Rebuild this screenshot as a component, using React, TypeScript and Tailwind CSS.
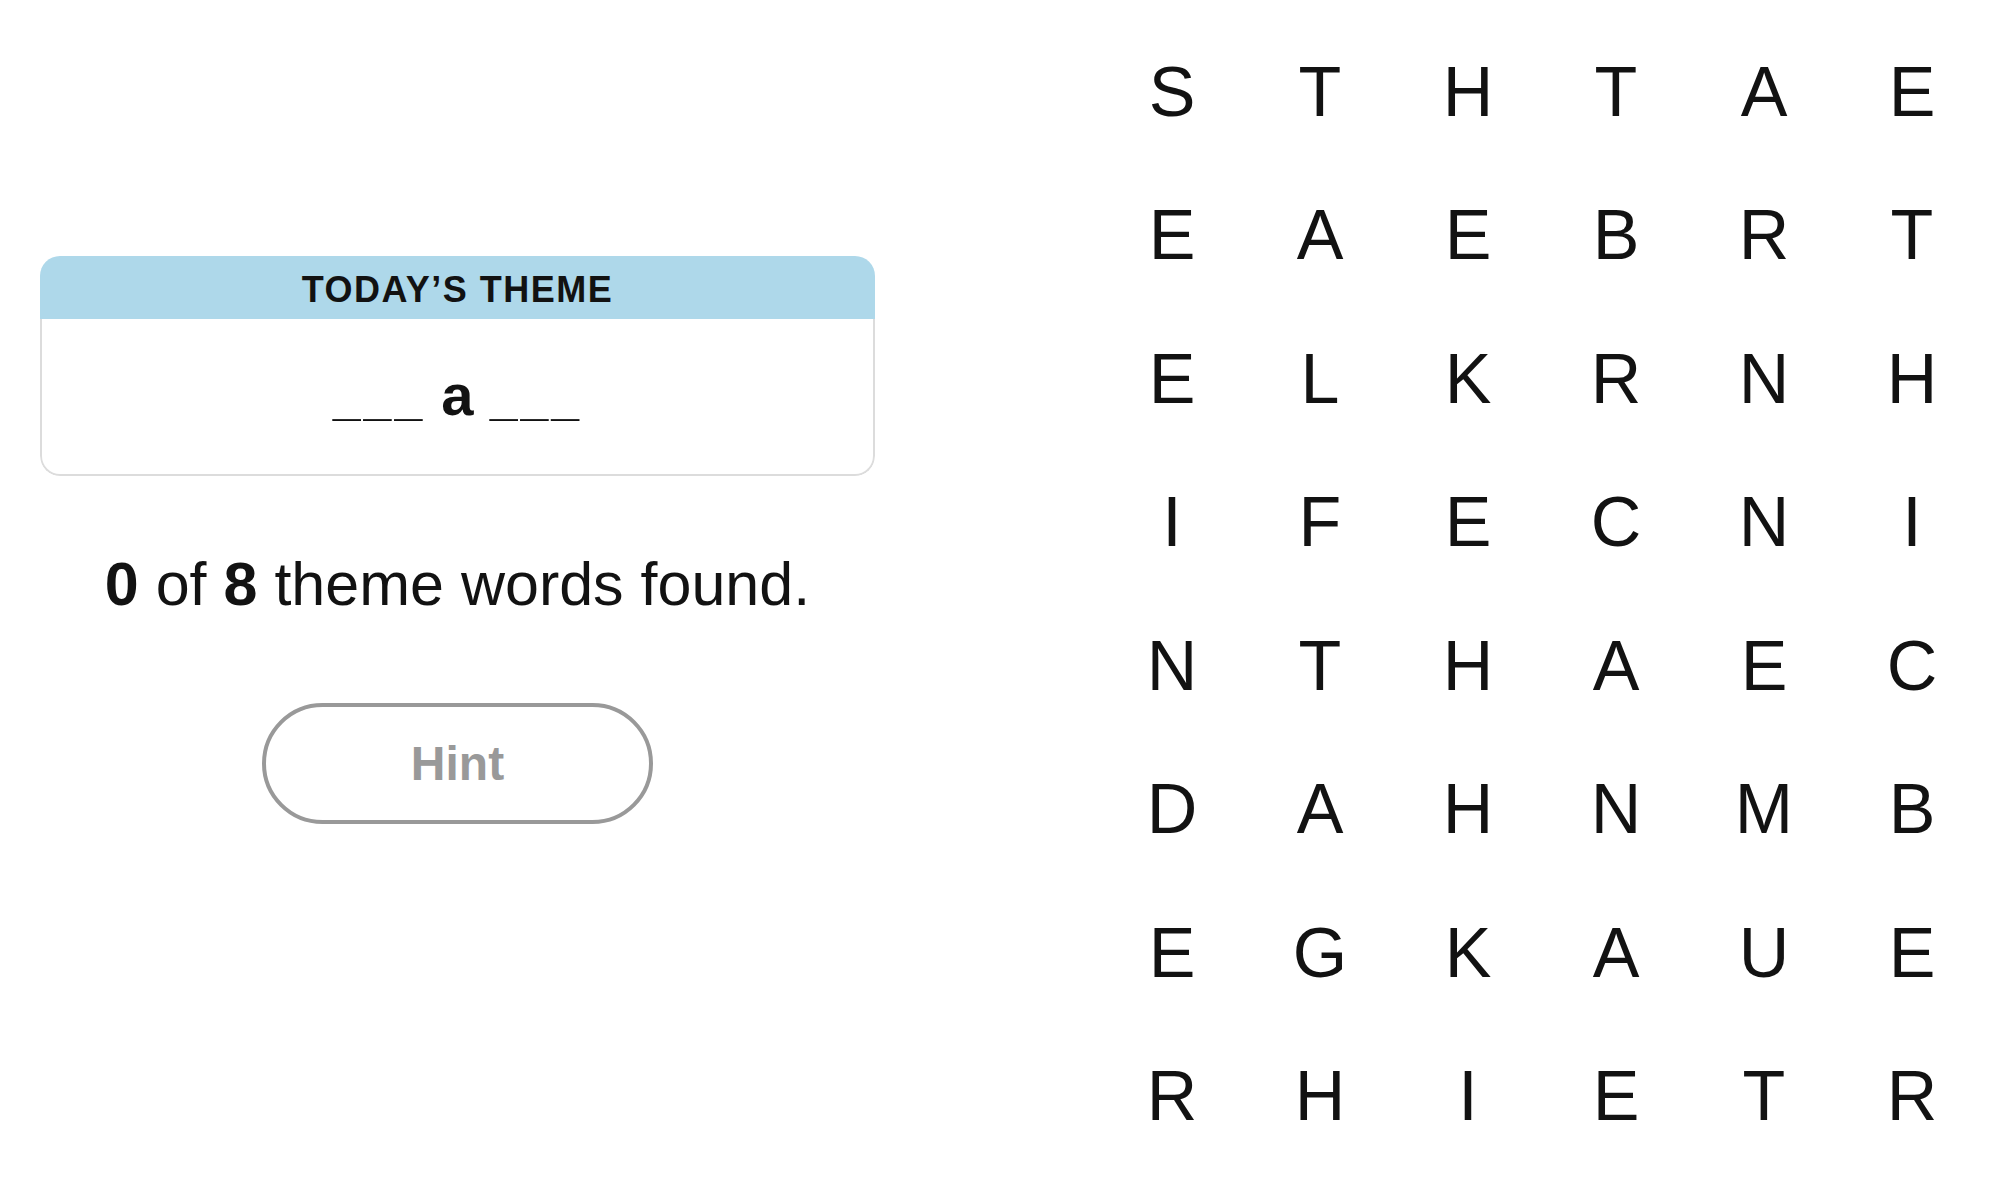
import React from "react";

const LETTERS = [
  "STHTAE",
  "EAEBRT",
  "ELKRNH",
  "IFECNI",
  "NTHAEC",
  "DAHNMB",
  "EGKAUE",
  "RHIETR",
];

function ThemeCard() {
  return (
    <div className="w-[835px] rounded-[20px] overflow-hidden">
      <div className="h-[63px] bg-[#aed8ea] flex items-center justify-center pt-[4px]">
        <span className="font-bold text-[36px] leading-none tracking-[1.5px] text-[#121212]">
          TODAY’S THEME
        </span>
      </div>
      <div className="h-[157px] border-2 border-t-0 border-[#dcdcdc] rounded-b-[20px] flex items-center justify-center pb-[4px]">
        <span className="font-bold text-[58px] leading-none text-[#121212]">
          <span className="text-[50px] tracking-[3px]">___</span> a{" "}
          <span className="text-[50px] tracking-[3px]">___</span>
        </span>
      </div>
    </div>
  );
}

export default function App() {
  return (
    <div className="w-[2000px] h-[1178px] bg-white flex justify-between pl-[40px] pr-[14px] font-['Liberation_Sans',Arial,sans-serif] text-[#121212]">
      <div className="w-[835px] flex flex-col items-center pt-[256px]">
        <ThemeCard />
        <p className="mt-[78px] text-[61px] leading-[60px] whitespace-nowrap">
          <b>0</b> of <b>8</b> theme words found.
        </p>
        <button
          type="button"
          className="mt-[89px] w-[391px] h-[121px] rounded-full border-4 border-[#999999] bg-white text-[48px] font-bold text-[#999999]"
        >
          Hint
        </button>
      </div>

      <div className="pt-[20px] grid grid-cols-[repeat(6,148px)] grid-rows-[repeat(8,143.5px)]">
        {LETTERS.flatMap((row, r) =>
          row.split("").map((ch, c) => (
            <div
              key={`${r}-${c}`}
              className="flex items-center justify-center text-[70px] leading-none text-[#121212]"
            >
              {ch}
            </div>
          ))
        )}
      </div>
    </div>
  );
}
